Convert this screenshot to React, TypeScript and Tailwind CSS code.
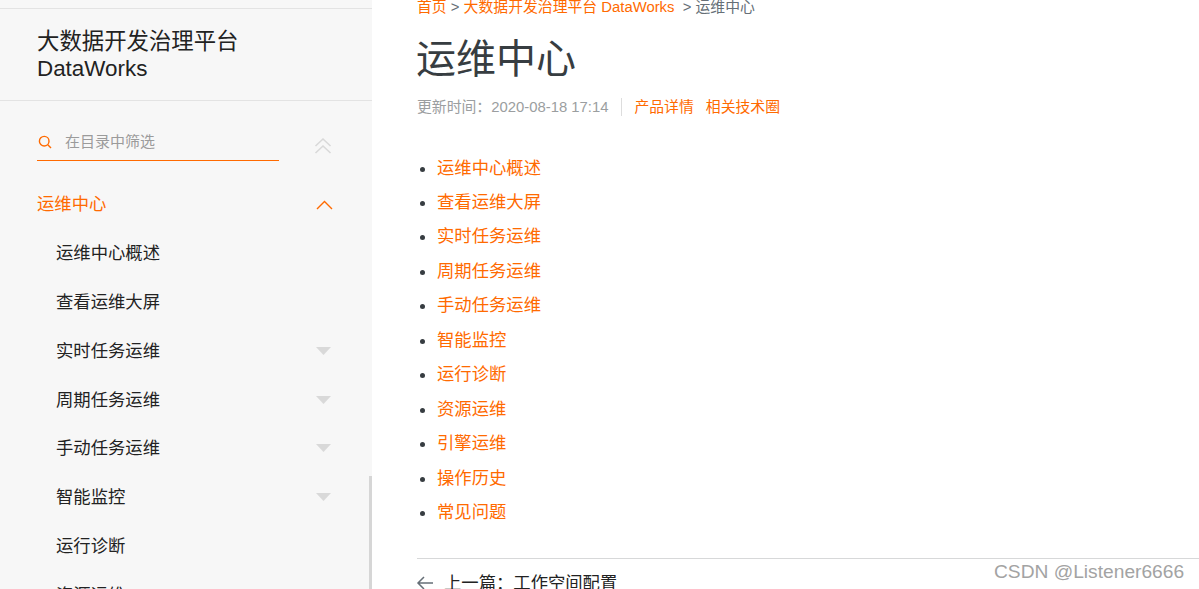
const FONT = "font-['Liberation_Sans','Noto_Sans_CJK_SC',sans-serif]";

const nav: { label: string; caret: boolean }[] = [
  { label: "运维中心概述", caret: false },
  { label: "查看运维大屏", caret: false },
  { label: "实时任务运维", caret: true },
  { label: "周期任务运维", caret: true },
  { label: "手动任务运维", caret: true },
  { label: "智能监控", caret: true },
  { label: "运行诊断", caret: false },
  { label: "资源运维", caret: false },
];

const links = [
  "运维中心概述",
  "查看运维大屏",
  "实时任务运维",
  "周期任务运维",
  "手动任务运维",
  "智能监控",
  "运行诊断",
  "资源运维",
  "引擎运维",
  "操作历史",
  "常见问题",
];

function Sidebar() {
  return (
    <aside className="relative w-[372px] h-full shrink-0 bg-[#f7f7f7] overflow-hidden">
      <div className="h-[8px]" />
      <div className="h-[93px] border-y border-[#e3e3e3] pl-[37px] pt-[19px] text-[22.4px] leading-[27px] text-[#222222]">
        <div>大数据开发治理平台</div>
        <div>DataWorks</div>
      </div>
      <div className="flex items-start pl-[37px] pt-[29px]">
        <div className="w-[242px] h-[31px] border-b border-[#ff6a00] flex items-center pb-[6px]">
          <svg width="14" height="14" viewBox="0 0 14 14" fill="none" stroke="#ff6a00" strokeWidth="1.4" className="ml-[1px]">
            <circle cx="6.2" cy="6.2" r="4.8" />
            <path d="M9.8 9.8L13 13" />
          </svg>
          <span className="ml-[13px] text-[15px] text-[#9b9b9b]">在目录中筛选</span>
        </div>
        <svg width="18" height="18" viewBox="0 0 18 18" fill="none" stroke="#d9d9d9" strokeWidth="1.6" className="ml-[35px] mt-[7px]">
          <path d="M1.5 9L9 2L16.5 9" />
          <path d="M1.5 16L9 9L16.5 16" />
        </svg>
      </div>
      <div className="flex items-center justify-between h-[48.8px] mt-[20px] pl-[37px] pr-[39px] text-[17.33px] text-[#ff6a00]">
        <span>运维中心</span>
        <svg width="17" height="10" viewBox="0 0 17 10" fill="none" stroke="#ff6a00" strokeWidth="1.4">
          <path d="M1 9L8.5 1.5L16 9" />
        </svg>
      </div>
      <ul>
        {nav.map((n) => (
          <li key={n.label} className="flex items-center justify-between h-[48.8px] pl-[56px] pr-[41px] text-[17.33px] text-[#222222]">
            <span>{n.label}</span>
            {n.caret && (
              <svg width="15" height="8" viewBox="0 0 15 8" fill="#d9d9d9" className="-mt-[2px]">
                <path d="M0 0H15L7.5 8Z" />
              </svg>
            )}
          </li>
        ))}
      </ul>
      <div className="absolute right-0 top-[476px] bottom-0 w-[3px] bg-[#d6d6d6]" />
    </aside>
  );
}

function Main() {
  return (
    <main className="flex-1 min-w-0 pl-[45px]">
      <div className="text-[14.85px] leading-[16px] -mt-[1px] text-[#666f77] whitespace-pre">
        <span className="text-[#ff6a00]">首页</span> &gt; <span className="text-[#ff6a00]">大数据开发治理平台 DataWorks</span>  &gt; 运维中心
      </div>
      <h1 className="mt-[16px] -ml-[1px] text-[40px] leading-[56px] font-normal text-[#373d41]">运维中心</h1>
      <div className="flex items-center mt-[10px] h-[20px] text-[14.85px] text-[#9b9ea0]">
        <span>更新时间：2020-08-18 17:14</span>
        <span className="w-px h-[18px] bg-[#dddddd] mx-[12.5px]" />
        <span className="text-[#ff6a00]">产品详情</span>
        <span className="ml-[12px] text-[#ff6a00]">相关技术圈</span>
      </div>
      <ul className="list-disc pl-[20px] mt-[33.5px] text-[17.33px] leading-[34.45px] text-[#373d41]">
        {links.map((l) => (
          <li key={l}>
            <span className="text-[#ff6a00]">{l}</span>
          </li>
        ))}
      </ul>
      <div className="mt-[28.5px] border-t border-[#d7d8d9] pt-[12px] flex items-center text-[17.33px] leading-[24px] text-[#222222]">
        <svg width="18" height="14" viewBox="0 0 18 14" fill="none" stroke="#666f77" strokeWidth="1.5" className="-ml-[1px] mr-[10px]">
          <path d="M17 7H2M8 1L2 7L8 13" />
        </svg>
        <span>上一篇：工作空间配置</span>
      </div>
    </main>
  );
}

export default function App() {
  return (
    <div className={`relative flex w-[1199px] h-[589px] overflow-hidden bg-white ${FONT}`}>
      <Sidebar />
      <Main />
      <div className="absolute left-[994px] top-[560px] text-[19.2px] leading-[24px] text-[#a3a3a3]">CSDN @Listener6666</div>
    </div>
  );
}
